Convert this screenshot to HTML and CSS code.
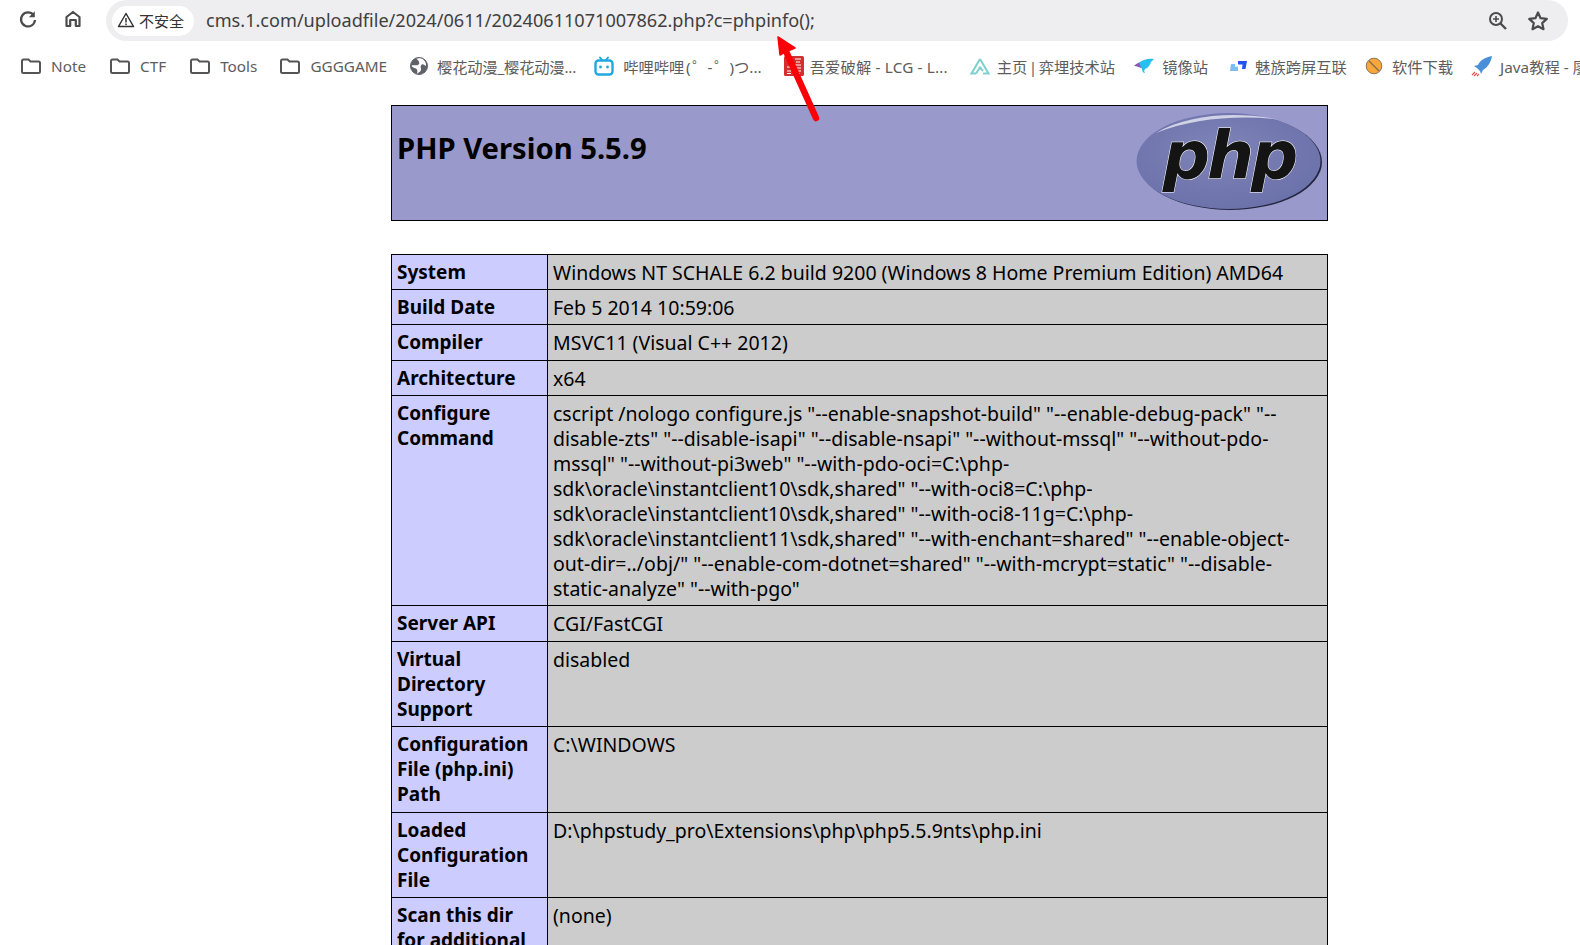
FILE: index.html
```html
<!DOCTYPE html>
<html lang="zh">
<head>
<meta charset="utf-8">
<title>phpinfo()</title>
<link rel="stylesheet" href="styles.css">
</head>
<body>
<header class="toolbar">
  <svg class="nav-icon" width="20" height="20" viewBox="0 0 20 20"><path d="M15.6 6.2A7 7 0 1 0 17 11" fill="none" stroke="#4b4b4b" stroke-width="2.200"/><path d="M16.8 2.2v6h-6z" fill="#4b4b4b"/></svg>
  <svg class="nav-icon home" width="20" height="20" viewBox="0 0 20 20"><path d="M3.500 17V8L10 3l6.500 5v9h-3.700v-6h-5.600v6z" fill="none" stroke="#4b4b4b" stroke-width="2.200" stroke-linejoin="round"/></svg>
  <div class="omnibox">
    <div class="chip">
      <svg width="18" height="18" viewBox="0 0 18 18"><path d="M9 2.500 16.500 15.500h-15z" fill="none" stroke="#333" stroke-width="1.500" stroke-linejoin="round"/><path d="M9 7v4.500M9 12.500v1.500" stroke="#333" stroke-width="1.500"/></svg>
      <span>不安全</span>
    </div>
    <div class="url">cms.1.com/uploadfile/2024/0611/20240611071007862.php?c=phpinfo();</div>
    <svg class="omni-icon" width="20" height="20" viewBox="0 0 20 20"><circle cx="8" cy="8" r="6" fill="none" stroke="#4b4b4b" stroke-width="2"/><path d="M12.500 12.500 18 18" stroke="#4b4b4b" stroke-width="2.400"/><path d="M5 8h6M8 5v6" stroke="#4b4b4b" stroke-width="1.600"/></svg>
    <svg class="omni-icon star" width="22" height="22" viewBox="0 0 22 22"><path d="M11 2.500l2.600 5.700 6.200.7-4.600 4.200 1.300 6.100L11 16.200l-5.500 3 1.300-6.100-4.600-4.200 6.200-.7z" fill="none" stroke="#4b4b4b" stroke-width="2.200" stroke-linejoin="round"/></svg>
  </div>
</header>
<nav class="bookmarks">
  <a class="bm b-note"><svg class="folder" width="22" height="18" viewBox="0 0 22 18"><path d="M2 4a1.500 1.500 0 0 1 1.500-1.500h5l2 2h8A1.500 1.500 0 0 1 20 6v8.500a1.500 1.500 0 0 1-1.500 1.500h-15A1.500 1.500 0 0 1 2 14.500z" fill="none" stroke="#555" stroke-width="2"/></svg><span>Note</span></a>
  <a class="bm b-ctf"><svg class="folder" width="22" height="18" viewBox="0 0 22 18"><path d="M2 4a1.500 1.500 0 0 1 1.500-1.500h5l2 2h8A1.500 1.500 0 0 1 20 6v8.500a1.500 1.500 0 0 1-1.500 1.500h-15A1.500 1.500 0 0 1 2 14.500z" fill="none" stroke="#555" stroke-width="2"/></svg><span>CTF</span></a>
  <a class="bm b-tools"><svg class="folder" width="22" height="18" viewBox="0 0 22 18"><path d="M2 4a1.500 1.500 0 0 1 1.500-1.500h5l2 2h8A1.500 1.500 0 0 1 20 6v8.500a1.500 1.500 0 0 1-1.500 1.500h-15A1.500 1.500 0 0 1 2 14.500z" fill="none" stroke="#555" stroke-width="2"/></svg><span>Tools</span></a>
  <a class="bm b-game"><svg class="folder" width="22" height="18" viewBox="0 0 22 18"><path d="M2 4a1.500 1.500 0 0 1 1.500-1.500h5l2 2h8A1.500 1.500 0 0 1 20 6v8.500a1.500 1.500 0 0 1-1.500 1.500h-15A1.500 1.500 0 0 1 2 14.500z" fill="none" stroke="#555" stroke-width="2"/></svg><span>GGGGAME</span></a>
  <a class="bm b-sakura"><svg width="18" height="18" viewBox="0 0 18 18"><circle cx="9" cy="9" r="8.500" fill="#5f6368"/><path d="M6 1.500c2 1.500 4 3.500 3 5.500S4 8 1.500 8.500c1 3 4.500 2 5.500 4s-.5 3.500.5 4.500c1-2 3-2 3.500-4s-1-2 0-4.500 3-1 5 .5c.5-3-1.500-6.500-5-8z" fill="#fff"/><circle cx="9" cy="9" r="8.500" fill="none" stroke="#5f6368"/></svg><span>樱花动漫_樱花动漫...</span></a>
  <a class="bm b-bili"><svg width="20" height="20" viewBox="0 0 20 20"><path d="M6 1.500 8 4M14 1.500 12 4" stroke="#20a8e0" stroke-width="2" stroke-linecap="round"/><rect x="1.500" y="4.500" width="17" height="14" rx="3" fill="none" stroke="#20a8e0" stroke-width="2.400"/><circle cx="6.500" cy="11" r="1.400" fill="#20a8e0"/><circle cx="13.500" cy="11" r="1.400" fill="#20a8e0"/></svg><span>哔哩哔哩 ( ゜- ゜)つ...</span></a>
  <a class="bm b-52"><svg width="20" height="20" viewBox="0 0 20 20"><rect x="0" y="0" width="20" height="20" rx="1.500" fill="#d32f2f"/><path d="M11 3h6M12 6h4M11 9h6M3 11h3M11 12h6M3 15h4M11 15h6M12 17.500h4M3 17.500h4" stroke="#fff" stroke-width="1.200"/></svg><span>吾爱破解 - LCG - L...</span></a>
  <a class="bm b-home"><svg width="20" height="18" viewBox="0 0 20 18"><path d="M10 2 18.500 16.500H13M6 16.500H1.500L10 2M6 16.500l4-6 3 3.500" fill="none" stroke="#7ed0cc" stroke-width="2"/></svg><span>主页 | 弈埋技术站</span></a>
  <a class="bm b-mirror"><svg width="20" height="18" viewBox="0 0 20 18"><path d="M0 9c3-3 7-5 10-4L7 11C5 10 3 9 0 9z" fill="#8a55b5"/><path d="M5 6c3-3 9-5 15-4-1 1-2 2-3 3-1 3-3 6-6 7-1 1-1 3 0 4-2 0-3-2-3-4C7 11 6 8 5 6z" fill="#25c1ee"/></svg><span>镜像站</span></a>
  <a class="bm b-meizu"><svg width="18" height="16" viewBox="0 0 18 16"><path d="M1 6h4v3l3-.500V13H0z" fill="#7dbdf8"/><path d="M8 3h9l-1.500 8H12l.5-4.500H8z" fill="#2155ee"/></svg><span>魅族跨屏互联</span></a>
  <a class="bm b-soft"><svg width="18" height="18" viewBox="0 0 18 18"><circle cx="9" cy="9" r="7.800" fill="#f9a63a" stroke="#8a7560"/><path d="M4 4l10 10" stroke="#7d6a55" stroke-width="1.300"/></svg><span>软件下载</span></a>
  <a class="bm b-java"><svg width="22" height="22" viewBox="0 0 22 22"><path d="M21 1C15 2 9 5 7 10l-4 1 3 2 3 3 1 3 2-4c5-3 8-8 9-14z" fill="#4a90d9"/><path d="M1 20l3-3M3 21l3-3M6 21l2-2" stroke="#e2574c" stroke-width="1.200"/></svg><span>Java教程 - 廖雪峰的官网</span></a>
</nav>
<main class="phpinfo">
  <table class="head-table">
    <tr class="h">
      <td>
        <svg class="logo" width="188" height="100" viewBox="0 0 188 100">
          <defs>
            <radialGradient id="lg" cx="45%" cy="40%" r="65%"><stop offset="0" stop-color="#7f85b8"/><stop offset="1" stop-color="#6a70a9"/></radialGradient>
          </defs>
          <ellipse cx="96" cy="51" rx="92" ry="48" fill="#24263f"/>
          <ellipse cx="94.500" cy="50" rx="92" ry="48" fill="url(#lg)"/>
          <path d="M22 22C52 4 100 0 142 8 100 4 57 8 22 22z" fill="#d0d2e6"/>
          <text x="95" y="67" text-anchor="middle" class="logo-text">php</text>
        </svg>
        <h1>PHP Version 5.5.9</h1>
      </td>
    </tr>
  </table>
  <table class="info-table">
    <tr><th>System</th><td>Windows NT SCHALE 6.2 build 9200 (Windows 8 Home Premium Edition) AMD64</td></tr>
    <tr><th>Build Date</th><td>Feb 5 2014 10:59:06</td></tr>
    <tr class="extra"><th>Compiler</th><td>MSVC11 (Visual C++ 2012)</td></tr>
    <tr><th>Architecture</th><td>x64</td></tr>
    <tr><th>Configure Command</th><td>cscript /nologo configure.js "--enable-snapshot-build" "--enable-debug-pack" "--disable-zts" "--disable-isapi" "--disable-nsapi" "--without-mssql" "--without-pdo-mssql" "--without-pi3web" "--with-pdo-oci=C:\php-sdk\oracle\instantclient10\sdk,shared" "--with-oci8=C:\php-sdk\oracle\instantclient10\sdk,shared" "--with-oci8-11g=C:\php-sdk\oracle\instantclient11\sdk,shared" "--with-enchant=shared" "--enable-object-out-dir=../obj/" "--enable-com-dotnet=shared" "--with-mcrypt=static" "--disable-static-analyze" "--with-pgo"</td></tr>
    <tr class="extra"><th>Server API</th><td>CGI/FastCGI</td></tr>
    <tr><th>Virtual Directory Support</th><td>disabled</td></tr>
    <tr class="extra"><th>Configuration File (php.ini) Path</th><td>C:\WINDOWS</td></tr>
    <tr><th>Loaded Configuration File</th><td>D:\phpstudy_pro\Extensions\php\php5.5.9nts\php.ini</td></tr>
    <tr><th>Scan this dir for additional .ini files</th><td>(none)</td></tr>
  </table>
</main>
<svg class="arrow" width="60" height="100" viewBox="0 0 60 100"><path d="M3 2 20 13 14 15.500 12 16 5 20z" fill="#fb0007" stroke="#fb0007" stroke-width="1.500" stroke-linejoin="round"/><path d="M10 14 41 83" stroke="#fb0007" stroke-width="6.500" stroke-linecap="round"/></svg>
</body>
</html>
```

FILE: styles.css
```css
* { box-sizing: border-box; }
html, body { margin: 0; height: 945px; overflow: hidden; background: #fff; }
body { position: relative; font-family: "Noto Sans", "Noto Sans CJK SC", sans-serif; color: #000; }

.toolbar { display: flex; align-items: center; height: 41px; padding-left: 18px; }
.nav-icon { flex: none; margin-bottom: 3px; }
.home { margin-left: 25px; margin-right: 23px; }
.omnibox { flex: none; width: 1462px; height: 41px; background: #eeedef; border-radius: 21px; display: flex; align-items: center; padding: 0 19px 0 6px; }
.chip { display: flex; align-items: center; gap: 4px; height: 30px; padding: 0 10px 1px 5px; background: #fff; border-radius: 15px; font-size: 15px; color: #333; }
.url { flex: 1; margin-left: 12px; padding-bottom: 1px; font-size: 18.100px; color: #3f3f3f; white-space: nowrap; }
.omni-icon { flex: none; }
.star { margin-left: 19px; }

.bookmarks { display: flex; align-items: center; height: 51px; padding: 0 0 2px 20px; white-space: nowrap; overflow: hidden; font-size: 15.300px; color: #5d5d5d; }
.bm { display: flex; align-items: center; gap: 9px; flex: none; }
.b-ctf { margin-left: 23px; }
.b-tools { margin-left: 23px; }
.b-game { margin-left: 22px; }
.b-sakura { margin-left: 23px; letter-spacing: -0.200px; }
.b-bili { margin-left: 18px; word-spacing: -2.300px; }
.b-52 { margin-left: 22px; gap: 6px; letter-spacing: 0.150px; }
.b-home { margin-left: 22px; gap: 7px; word-spacing: -2.500px; }
.b-mirror { margin-left: 19px; gap: 8px; }
.b-meizu { margin-left: 22px; gap: 7px; }
.b-soft { margin-left: 18px; }
.b-java { margin-left: 18px; gap: 7px; }

.phpinfo { margin: 13px 0 0 391px; width: 937px; font-size: 19.500px; line-height: 25px; }
table { border-collapse: collapse; width: 100%; table-layout: fixed; }
.head-table { height: 115px; margin-bottom: 33px; }
.h td { background: #9999cc; border: 1px solid #000; padding: 4px 5px; vertical-align: top; height: 115px; }
.h h1 { margin: 20px 0 0; font-size: 29.200px; line-height: 36px; font-weight: 700; }
.logo { float: right; margin-top: 1px; }
.logo-text { font-family: "DejaVu Sans", sans-serif; font-weight: 700; font-style: italic; font-size: 66px; letter-spacing: -3px; fill: #141414; stroke: #fff; stroke-width: 1; paint-order: stroke; }

.info-table th, .info-table td { border: 1px solid #000; padding: 5px 5px 4px; vertical-align: top; text-align: left; overflow-wrap: break-word; }
.info-table th { width: 156px; background: #ccccff; font-weight: 700; font-size: 19px; }
.info-table td { background: #cccccc; }
.info-table .extra th, .info-table .extra td { padding-bottom: 5px; }

.arrow { position: absolute; left: 775px; top: 35px; }
```
